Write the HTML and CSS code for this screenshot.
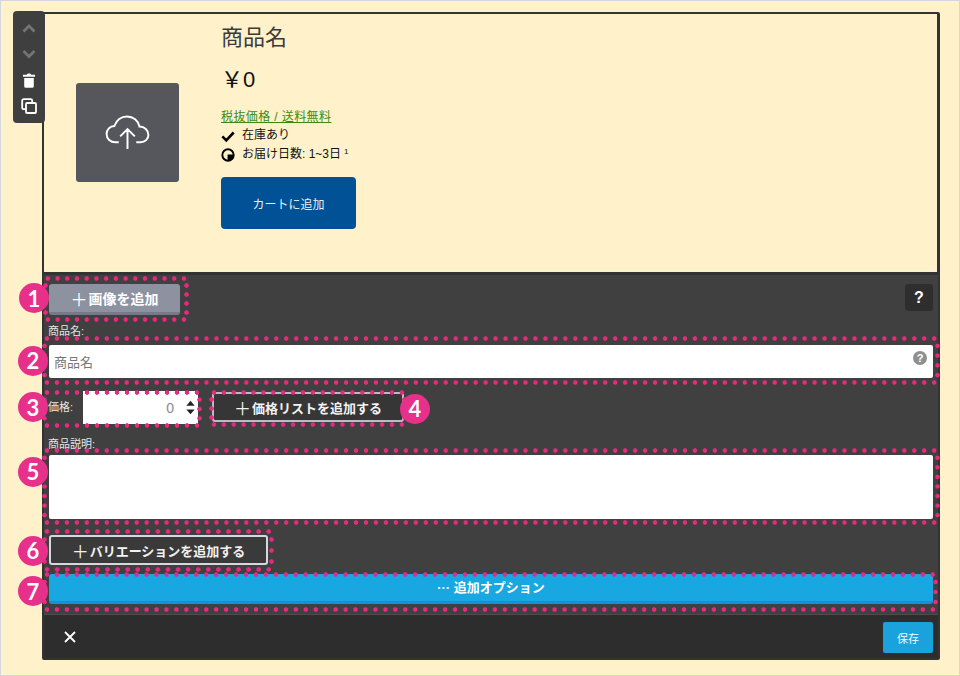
FILE: index.html
```html
<!DOCTYPE html>
<html lang="ja">
<head>
<meta charset="utf-8">
<title>商品名</title>
<link rel="stylesheet" href="styles.css">
</head>
<body>
<div class="page">
  <div class="card">
    <div class="side-tools">
      <svg class="tool" viewBox="0 0 16 16"><path d="M2.500 11.500L8 6l5.500 5.500" fill="none" stroke="#747474" stroke-width="2.800"/></svg>
      <svg class="tool" viewBox="0 0 16 16"><path d="M2.500 5L8 10.500 13.500 5" fill="none" stroke="#747474" stroke-width="2.800"/></svg>
      <svg class="tool" viewBox="0 0 16 16"><path d="M5.800 2.800C6 1.200 10 1.200 10.200 2.800H14v2H2v-2zM3.200 6h9.600v8.200a1.500 1.500 0 0 1-1.500 1.500H4.700a1.500 1.500 0 0 1-1.500-1.500z" fill="#fff"/></svg>
      <svg class="tool" viewBox="0 0 16 16"><rect x="1.200" y="1.200" width="10" height="10" rx="1.500" fill="none" stroke="#fff" stroke-width="1.800"/><rect x="5" y="5" width="10" height="10" rx="1" fill="#404040" stroke="#fff" stroke-width="1.800"/></svg>
    </div>
    <section class="preview">
      <div class="image-box">
        <svg class="cloud" viewBox="0 0 46 36"><path d="M14 28H10.500C5.500 28 1.500 24.500 1.500 19.500C1.500 15 5 11.500 9.500 11.300C11.500 5.500 16.500 1.500 22.500 1.500C29 1.500 34 6 35.300 11.800C40.500 12 44.500 15.500 44.500 20.500C44.500 24.800 41 28 36.500 28H32M23 35V15M15.500 22L23 14.500 30.500 22" fill="none" stroke="#fff" stroke-width="2"/></svg>
      </div>
      <div class="info">
        <h1 class="title">商品名</h1>
        <div class="price">￥0</div>
        <a class="tax">税抜価格 / 送料無料</a>
        <div class="meta"><svg class="meta-icon" viewBox="0 0 16 16"><path d="M1.500 8.500L6 13 14.500 4" fill="none" stroke="#000" stroke-width="3"/></svg><span>在庫あり</span></div>
        <div class="meta"><svg class="meta-icon" viewBox="0 0 16 16"><circle cx="8" cy="8" r="6.500" fill="none" stroke="#000" stroke-width="2.200"/><path d="M7.500 7.500h6.500v1a6 6 0 0 1-6.500 5.500z" fill="#000"/></svg><span>お届け日数: 1~3日</span><sup class="note">1</sup></div>
        <div class="cart">カートに追加</div>
      </div>
    </section>
    <section class="panel">
      <div class="row-top">
        <div class="dots box-one">
          <span class="badge badge-left badge-one">1</span>
          <div class="btn-image"><span class="plus">＋</span>画像を追加</div>
        </div>
        <div class="help-btn">?</div>
      </div>
      <div class="label label-name">商品名:</div>
      <div class="dots box-wide box-name">
        <span class="badge badge-left">2</span>
        <div class="field field-name">商品名<span class="hint">?</span></div>
      </div>
      <div class="row-price">
        <div class="dots box-price">
          <span class="badge badge-left badge-three">3</span>
          <span class="label price-label">価格:</span>
          <div class="number"><span>0</span><svg class="stepper" viewBox="0 0 12 20"><path d="M6 1l5.500 6.500H.5zM6 19L.5 12.500h11z" fill="#222"/></svg></div>
        </div>
        <div class="dots box-list">
          <span class="badge badge-right">4</span>
          <div class="btn-outline btn-list"><span class="plus">＋</span>価格リストを追加する</div>
        </div>
      </div>
      <div class="label label-desc">商品説明:</div>
      <div class="dots box-wide box-desc">
        <span class="badge badge-left badge-five">5</span>
        <div class="field field-desc"></div>
      </div>
      <div class="dots box-var">
        <span class="badge badge-left">6</span>
        <div class="btn-outline btn-var"><span class="plus">＋</span>バリエーションを追加する</div>
      </div>
      <div class="dots box-wide box-more">
        <span class="badge badge-left badge-seven">7</span>
        <div class="more">··· 追加オプション</div>
      </div>
    </section>
    <footer class="footer">
      <svg class="close" viewBox="0 0 12 12"><path d="M1 1l10 10M11 1L1 11" stroke="#fff" stroke-width="1.800" fill="none"/></svg>
      <div class="save">保存</div>
    </footer>
  </div>
</div>
</body>
</html>
```
FILE: styles.css
```css
* { box-sizing: border-box; }
html, body { margin: 0; padding: 0; }
body {
  font-family: "Liberation Sans", "Noto Sans CJK JP", sans-serif;
  color: #222;
}
.page {
  width: 960px;
  height: 676px;
  background: #fff2cb;
  border: 1px solid #d3d8de;
  padding: 11px 0 0 41px;
}
.card {
  position: relative;
  width: 898px;
  height: 648px;
  background: #333;
  border: 2px solid #333;
  border-radius: 2px;
  display: flex;
  flex-direction: column;
}
.side-tools {
  position: absolute;
  left: -31px;
  top: -3px;
  width: 32px;
  height: 112px;
  background: #3f3f3f;
  border-radius: 4px;
  display: flex;
  flex-direction: column;
  align-items: center;
  padding: 9px 0 0 0;
  gap: 10px;
  z-index: 3;
}
.tool { width: 16px; height: 16px; display: block; }
.preview {
  height: 258px;
  width: 893px;
  flex: none;
  background: #fff2cb;
  display: flex;
  padding-left: 32px;
  border-bottom: 1px solid #eee;
}
.image-box {
  width: 103px;
  height: 99px;
  margin-top: 69px;
  background: #56575c;
  border-radius: 3px;
  display: flex;
  align-items: center;
  justify-content: center;
}
.cloud { width: 45px; height: 35px; }
.info { margin-left: 42px; display: flex; flex-direction: column; align-items: flex-start; }
.title { margin: 9px 0 0; font-size: 22px; line-height: 30px; font-weight: 400; color: #3a3a3a; }
.price { margin-top: 12px; font-size: 22px; line-height: 30px; color: #111; }
.tax { margin-top: 14px; font-size: 12px; line-height: 17px; color: #3a8a12; text-decoration: underline; letter-spacing: .4px; }
.meta { display: flex; align-items: center; font-size: 12px; line-height: 19px; color: #111; }
.meta-icon { width: 14px; height: 14px; margin-right: 7px; }
.note { font-size: 8px; line-height: 8px; margin: -6px 0 0 3px; }
.cart {
  margin-top: 13px;
  width: 135px;
  height: 52px;
  background: #005196;
  color: #e8eef5;
  border-radius: 4px;
  font-size: 12px;
  display: flex;
  align-items: center;
  justify-content: center;
}
.panel {
  height: 343px;
  flex: none;
  background: #404040;
  border-top: 3px solid #333;
  border-bottom: 1px solid #4c4c4c;
}
.row-top { display: flex; justify-content: space-between; padding: 1px 5px 0 0; }
.dots { position: relative; flex: none; }
.dots::before,
.dots::after {
  content: "";
  position: absolute;
  pointer-events: none;
  z-index: 1;
  --dot: radial-gradient(circle, #e8297f 1.900px, rgba(232,41,127,0) 2.600px);
}
.dots::after {
  inset: 0;
  background:
    var(--dot) 0 0 / 10px 5px round no-repeat,
    var(--dot) 0 100% / 10px 5px round no-repeat;
}
.dots::before {
  inset: 5px 0;
  background:
    var(--dot) 100% 0 / 5px 10px no-repeat round,
    var(--dot) 0 0 / 5px 10px no-repeat round;
}
.box-one { width: 146px; height: 46px; margin-left: -1px; padding: 8px 0 0 6px; }
.btn-image {
  width: 131px;
  height: 31px;
  background: #8d92a1;
  border-bottom: 3px solid #767a88;
  border-radius: 3px;
  color: #fff;
  font-size: 14px;
  font-weight: 700;
  display: flex;
  align-items: center;
  justify-content: center;
}
.plus { font-size: 17px; font-weight: 400; margin-right: 1px; }
.help-btn {
  width: 28px;
  height: 27px;
  margin-top: 8px;
  background: #2e2e2e;
  border-radius: 3px;
  color: #fff;
  font-size: 16px;
  font-weight: 700;
  display: flex;
  align-items: center;
  justify-content: center;
}
.label { font-size: 11px; line-height: 13px; color: #e6e6e6; }
.label-name { padding-left: 4px; margin-top: 3px; }
.box-wide { width: 898px; margin-left: -2px; }
.box-name { height: 49px; margin-top: -2px; padding: 9px 0 0 7px; }
.field { width: 884px; background: #fff; }
.field-name {
  height: 33px;
  padding-left: 5px;
  font-size: 13px;
  color: #777;
  display: flex;
  align-items: center;
  justify-content: space-between;
  border-radius: 2px;
}
.hint {
  width: 14px;
  height: 14px;
  margin: -8px 6px 0 0;
  border-radius: 50%;
  background: #8f8f8f;
  color: #fff;
  font-size: 11px;
  font-weight: 700;
  line-height: 14px;
  text-align: center;
}
.row-price { display: flex; margin-top: 5px; }
.box-price {
  width: 160px;
  height: 38px;
  margin-left: -2px;
  display: flex;
  padding-left: 6px;
}
.price-label { line-height: 34px; width: 35px; }
.number {
  width: 115px;
  height: 33px;
  margin-top: 1px;
  background: #fff;
  color: #8a8a8a;
  font-size: 14px;
  display: flex;
  align-items: center;
  justify-content: flex-end;
  padding-right: 3px;
}
.stepper { width: 9px; height: 15px; margin-left: 12px; }
.box-list { width: 198px; height: 37px; margin-left: 7px; padding: 2px 0 0 3px; }
.btn-outline {
  border: 2px solid #b9bcc4;
  border-radius: 3px;
  background: #363636;
  color: #f2f2f2;
  font-size: 13px;
  font-weight: 700;
  display: flex;
  align-items: center;
  justify-content: center;
}
.btn-list { width: 192px; height: 30px; }
.label-desc { padding-left: 4px; margin-top: 10px; }
.box-desc { height: 77px; margin-top: -3px; padding: 7px 0 0 7px; }
.field-desc { height: 64px; border-radius: 2px; }
.box-var { width: 232px; height: 43px; margin-left: -2px; margin-top: 4px; padding: 6px 0 0 7px; }
.btn-var { width: 219px; height: 30px; background: #3a3a3a; border-color: #d5d8de; }
.box-more { width: 896px; height: 40px; padding: 2px 0 0 7px; }
.more {
  width: 884px;
  height: 30px;
  background: #19a7e1;
  border-bottom: 3px solid #1a8fd2;
  border-radius: 3px;
  color: #fff;
  font-size: 13px;
  font-weight: 700;
  text-align: center;
  line-height: 28px;
}
.badge {
  position: absolute;
  width: 30px;
  height: 30px;
  border-radius: 50%;
  background: #e6308a;
  color: #fff;
  font-family: "Lato", sans-serif;
  font-size: 22px;
  font-weight: 700;
  display: flex;
  align-items: center;
  justify-content: center;
  z-index: 2;
  top: 50%;
  margin-top: -15px;
}
.badge-left { left: -24px; }
.badge-right { right: -23px; }
.badge-one { margin-top: -16px; }
.badge-three { margin-top: -17px; }
.badge-five { margin-top: -30px; }
.badge-seven { margin-top: -16px; }
.footer {
  flex: 1;
  background: #2d2d2d;
  display: flex;
  align-items: center;
  justify-content: space-between;
  padding: 0 5px 0 20px;
}
.close { width: 12px; height: 12px; margin-top: 1px; }
.save {
  width: 50px;
  height: 31px;
  background: #19a2dc;
  border-radius: 2px;
  color: #f2fbff;
  font-size: 11px;
  display: flex;
  align-items: center;
  justify-content: center;
  margin-top: 2px;
}
```
